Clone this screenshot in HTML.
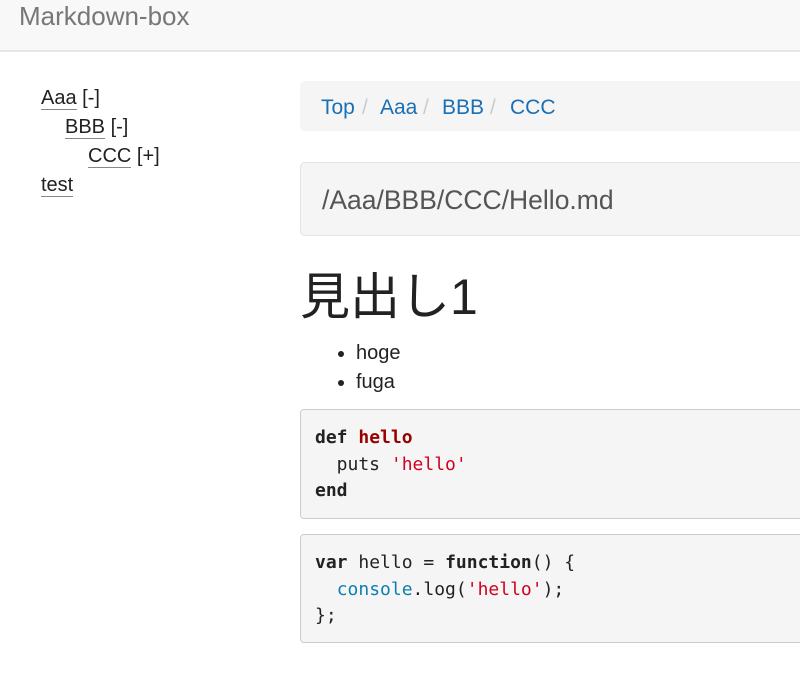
<!DOCTYPE html>
<html><head><meta charset="utf-8"><style>
body{margin:0;width:800px;height:681px;overflow:hidden;background:#fff;font-family:"Liberation Sans","Noto Sans CJK JP",sans-serif;font-size:19px;color:#333}
.nav{position:absolute;left:0;top:0;width:800px;height:50px;background:#f8f8f8;border-bottom:2px solid #e7e7e7}
.brand{position:absolute;left:19px;top:1px;font-size:26px;color:#777}
.side{position:absolute;left:41px;top:84px;line-height:29px;color:#222;font-size:20px}
.side a{color:#222;text-decoration:none;border-bottom:1px solid #888}
.bc{position:absolute;left:300px;top:81px;width:520px;height:50px;background:#f5f5f5;border-radius:5px}
.bc span{position:absolute;top:15px;color:#1a6fb5;font-size:21px}
.bc i{position:absolute;top:15px;color:#ccc;font-style:normal;font-size:21px}
.path{position:absolute;left:300px;top:162px;width:520px;height:72px;background:#f5f5f5;border:1px solid #e3e3e3;border-radius:5px}
.path div{position:absolute;left:21px;top:22px;font-size:26.5px;color:#555}
h1{position:absolute;left:300px;top:267px;margin:0;font-weight:normal;font-size:50px;color:#222;line-height:60px}
ul{position:absolute;left:318px;top:339px;margin:0;padding-left:38px;line-height:28.5px;color:#222;font-size:20px}
pre{position:absolute;left:300px;width:520px;margin:0;background:#f5f5f5;border:1px solid #ccc;border-radius:4px;font-family:"DejaVu Sans Mono",monospace;font-size:18px;line-height:26.5px;padding:15px 14px;box-sizing:border-box;color:#222}
b{font-weight:bold}.r{color:#900}.s{color:#d1001f}.c{color:#0e7fb0}
</style></head><body>
<div class="nav"><div class="brand">Markdown-box</div></div>
<div class="side">
<div><a>Aaa</a> [-]</div>
<div style="padding-left:24px"><a>BBB</a> [-]</div>
<div style="padding-left:47px"><a>CCC</a> [+]</div>
<div><a>test</a></div>
</div>
<div class="bc"><span style="left:21px">Top</span><i style="left:62px">/</i><span style="left:80px">Aaa</span><i style="left:123px">/</i><span style="left:142px">BBB</span><i style="left:190px">/</i><span style="left:210px">CCC</span></div>
<div class="path"><div>/Aaa/BBB/CCC/Hello.md</div></div>
<h1>見出し1</h1>
<ul><li>hoge</li><li>fuga</li></ul>
<pre style="top:409px;height:110px"><b>def</b> <b class="r">hello</b>
  puts <span class="s">'hello'</span>
<b>end</b></pre>
<pre style="top:534px;height:109px"><b>var</b> hello = <b>function</b>() {
  <span class="c">console</span>.log(<span class="s">'hello'</span>);
};</pre>
</body></html>
